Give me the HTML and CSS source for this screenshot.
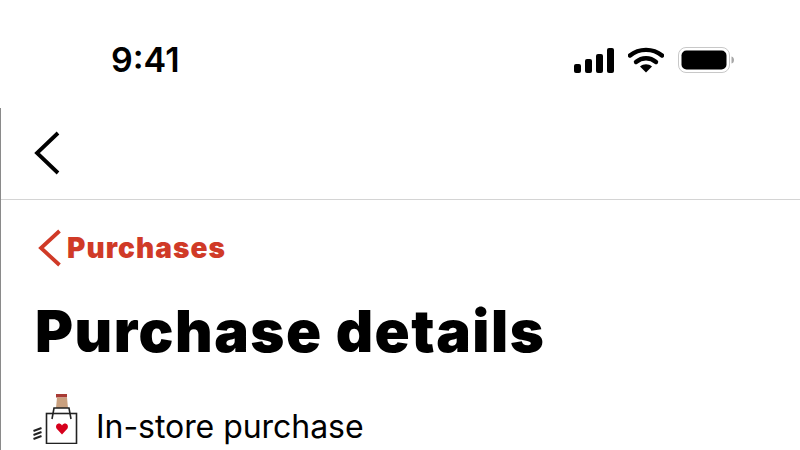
FILE: index.html
```html
<!DOCTYPE html>
<html lang="en">
<head>
<meta charset="utf-8">
<title>Purchase details</title>
<link rel="stylesheet" href="styles.css">
</head>
<body>
<header class="status">
  <span class="time">9:41</span>
  <div class="status-icons">
    <svg class="signal" width="40" height="25" viewBox="0 0 40 25"><rect x="0" y="16" width="7" height="9" rx="2"/><rect x="11" y="11" width="7" height="14" rx="2"/><rect x="22" y="6" width="7" height="19" rx="2"/><rect x="33" y="0" width="7" height="25" rx="2"/></svg>
    <svg class="wifi" width="36" height="26" viewBox="0 0 36 26"><path d="M2 8.500C11 1 25 1 34 8.500" fill="none" stroke="#000" stroke-width="4.400" stroke-linecap="round"/><path d="M8 15C14 10 22 10 28 15" fill="none" stroke="#000" stroke-width="4.400" stroke-linecap="round"/><path d="M12 19.500C15.500 16.500 20.500 16.500 24 19.500L18 25.500Z"/></svg>
    <svg class="battery" width="56" height="26" viewBox="0 0 56 26"><rect x="0.500" y="0.500" width="51" height="25" rx="7.500" fill="none" stroke="#c8c8c8"/><rect x="3.500" y="3.500" width="45" height="19" rx="5"/><path d="M53.500 9.500C55.500 10 56 11.500 56 13S55.500 16 53.500 16.500Z" fill="#a8a8a8"/></svg>
  </div>
</header>
<main class="screen">
  <nav class="nav">
    <svg width="26" height="44" viewBox="0 0 26 44"><path d="M24 2L3 22L24 42" fill="none" stroke="#000" stroke-width="3.800"/></svg>
  </nav>
  <section class="content">
    <a class="crumb">
      <svg width="24" height="38" viewBox="0 0 24 38"><path d="M21.500 2L3 19L21.500 36" fill="none" stroke="#d03a27" stroke-width="3.800"/></svg>
      <span>Purchases</span>
    </a>
    <h1 class="title">Purchase details</h1>
    <div class="kind">
      <svg class="bag" width="46" height="50" viewBox="0 0 46 50">
        <rect x="23" y="0" width="11" height="3.500" fill="#a83a34"/>
        <path d="M24 3.500h10l1 10.500h-12z" fill="#c9a07e"/>
        <rect x="13.500" y="19.500" width="30" height="30" fill="#fff" stroke="#222" stroke-width="1.600"/>
        <path d="M19 25L21 14H36L38 25" fill="none" stroke="#222" stroke-width="1.600"/>
        <path d="M29 40.500L23.500 34.500C21.500 30.500 26.500 27.500 29 31.500C31.500 27.500 36.500 30.500 34.500 34.500Z" fill="#d6001c"/>
        <path d="M0.500 37l8-3M0.500 41l8-3M0.500 45l8-3" fill="none" stroke="#222" stroke-width="1.900"/>
      </svg>
      <span class="kind-label">In-store purchase</span>
    </div>
  </section>
</main>
</body>
</html>
```
FILE: styles.css
```css
* { box-sizing: border-box; }
html, body { margin: 0; height: 450px; overflow: hidden; background: #fff; }
body { font-family: Inter, "Liberation Sans", sans-serif; color: #000; }
.status { height: 108px; padding: 38px 66px 0 111px; display: flex; justify-content: space-between; align-items: flex-start; }
.time { font-size: 34px; font-weight: 600; line-height: 44px; }
.status-icons { display: flex; align-items: center; gap: 14px; padding-top: 9px; }
.screen { border-left: 1px solid #8a8a8a; height: 342px; }
.nav { height: 92px; border-bottom: 1px solid #d4d4d4; padding: 23px 0 0 33px; display: flex; align-items: flex-start; }
.content { padding: 29px 0 0 37px; }
.crumb { display: flex; align-items: center; gap: 5px; color: #d03a27; font-size: 28px; font-weight: 900; line-height: 38px; letter-spacing: 1.050px; }
.title { margin: 30px 0 0 -3px; font-size: 58px; font-weight: 900; line-height: 68px; letter-spacing: 1.500px; }
.kind { margin: 29px 0 0 -5px; display: flex; align-items: flex-start; gap: 17px; }
.kind-label { margin-top: 8px; font-size: 32px; line-height: 50px; letter-spacing: -0.050px; }
```
